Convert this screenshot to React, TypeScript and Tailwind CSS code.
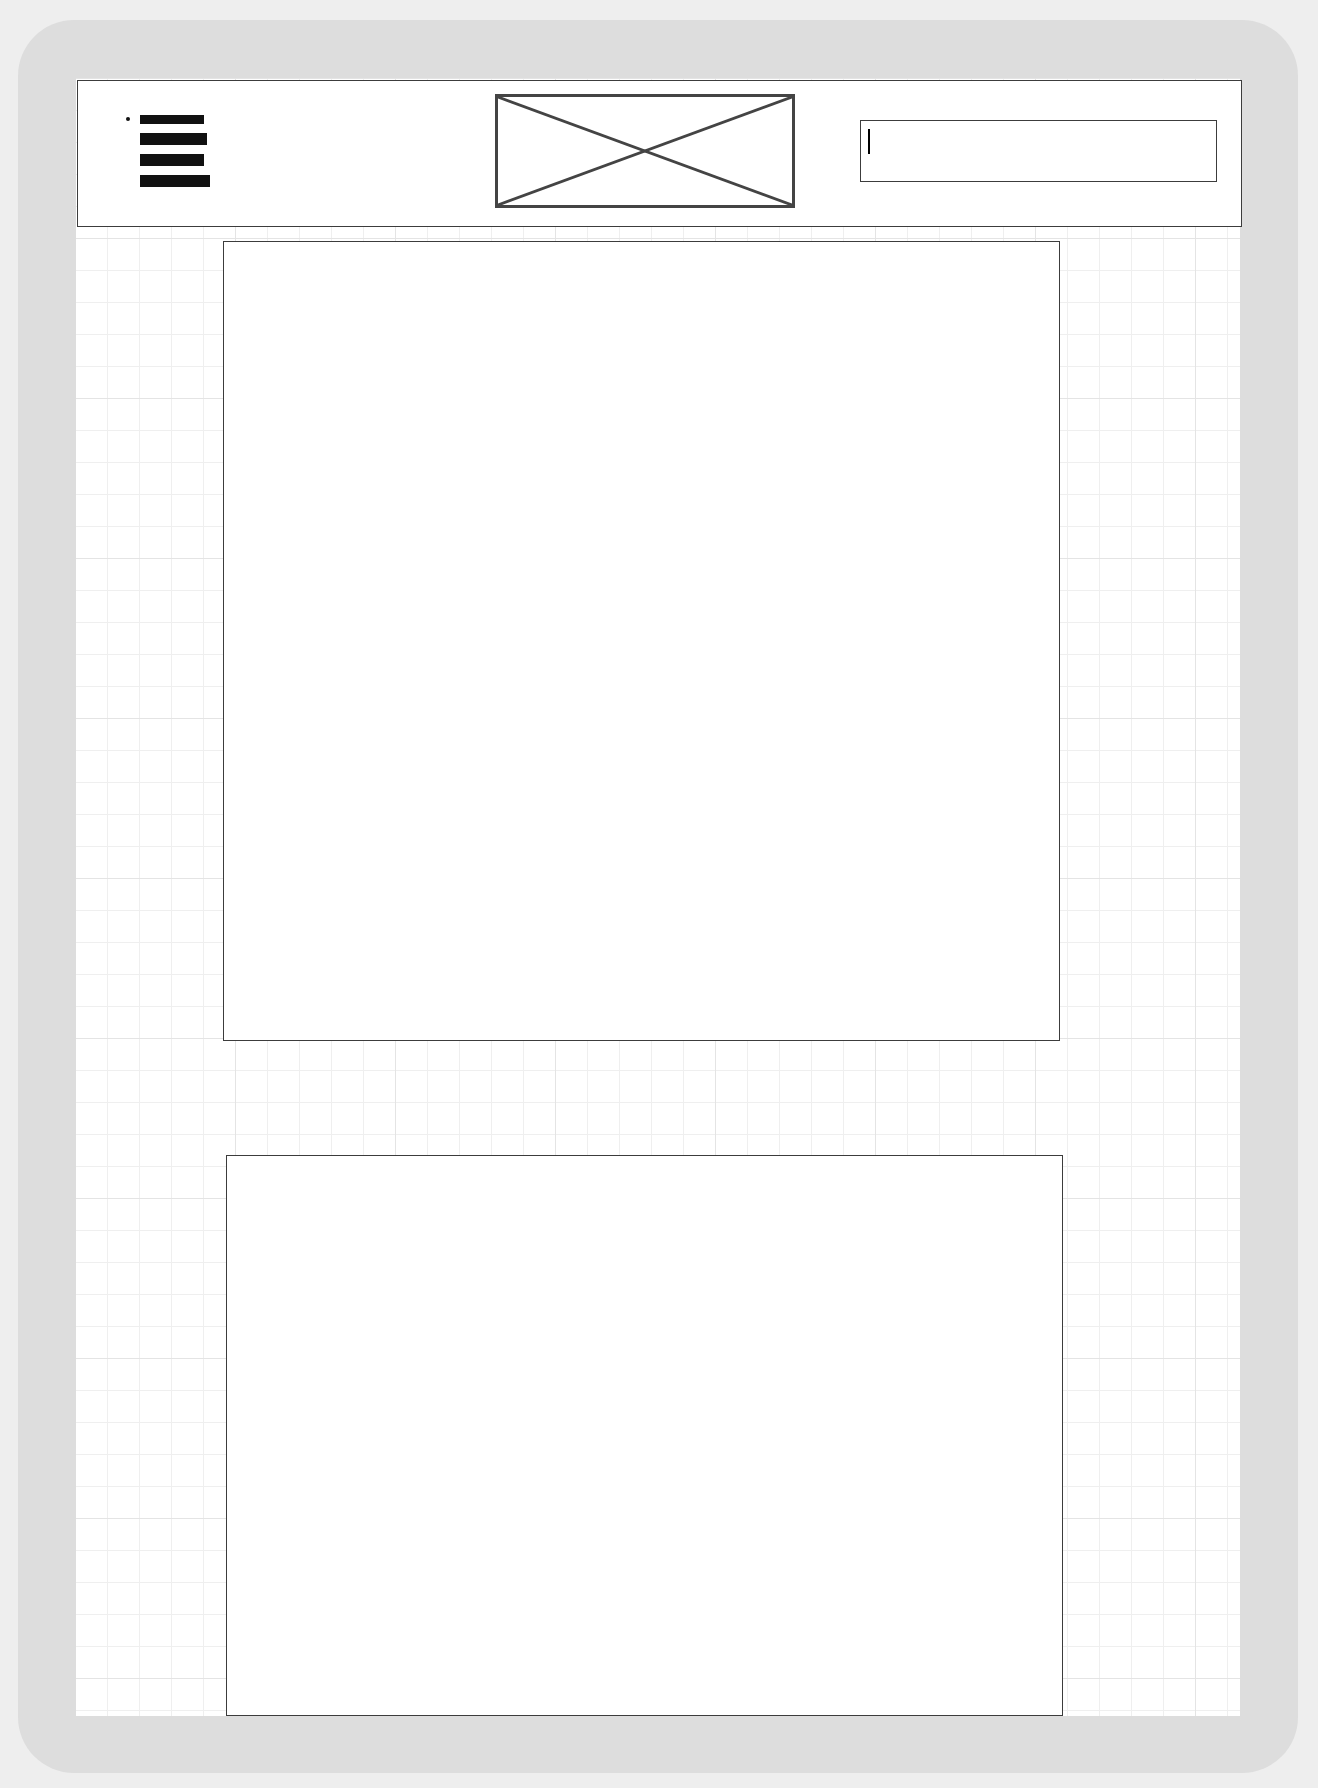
const bars = [
	{ w: "w-[64px]", h: "h-[9px]" },
	{ w: "w-[67px]", h: "h-[12px]" },
	{ w: "w-[64px]", h: "h-[12px]" },
	{ w: "w-[70px]", h: "h-[12px]" },
];

const Header = () => {
	return (
		<header className="ml-px mt-[2px] flex h-[147px] w-[1165px] items-start border border-[#3c3c3c] bg-white">
			<div className="flex pl-[48px] pt-[34px]">
				<span className="mt-[2px] block h-[4px] w-[4px] rounded-full bg-[#111]" />
				<ul className="ml-[10px] flex flex-col gap-[9px]">
					{bars.map((b, ix) => (
						<li key={ix} className={`block bg-[#111] ${b.w} ${b.h}`} />
					))}
				</ul>
			</div>
			<div className="relative ml-[285px] mt-[13px] h-[114px] w-[300px] border-[3px] border-[#444]">
				<svg
					className="absolute inset-0 h-full w-full"
					viewBox="0 0 294 108"
					preserveAspectRatio="none"
				>
					<line x1="0" y1="0" x2="294" y2="108" stroke="#444" strokeWidth="2.8" />
					<line x1="294" y1="0" x2="0" y2="108" stroke="#444" strokeWidth="2.8" />
				</svg>
			</div>
			<div className="ml-[65px] mt-[39px] h-[62px] w-[357px] border border-[#3c3c3c] bg-white pl-[7px] pt-[8px]">
				<span className="block h-[25px] w-[2px] bg-black" />
			</div>
		</header>
	);
};

export default function App() {
	return (
		<div className="min-h-screen bg-[#eeeeee] pl-[18px] pt-[20px]">
			<div className="h-[1753px] w-[1280px] rounded-[56px] bg-[#dddddd] pl-[58px] pt-[58px]">
				<div className="flex h-[1638px] w-[1164px] flex-col items-start bg-white bg-[linear-gradient(to_right,#e4e4e4_1px,transparent_1px),linear-gradient(to_bottom,#e4e4e4_1px,transparent_1px),linear-gradient(to_right,#efefef_1px,transparent_1px),linear-gradient(to_bottom,#efefef_1px,transparent_1px)] bg-size-[160px_160px,160px_160px,32px_32px,32px_32px] bg-position-[159px_0px,0px_0px,31px_0px,0px_0px]">
					<Header />
					<section className="ml-[147px] mt-[14px] h-[800px] w-[837px] border border-[#3c3c3c] bg-white" />
					<section className="ml-[150px] mt-[114px] h-[561px] w-[837px] border border-[#3c3c3c] bg-white" />
				</div>
			</div>
		</div>
	);
}
